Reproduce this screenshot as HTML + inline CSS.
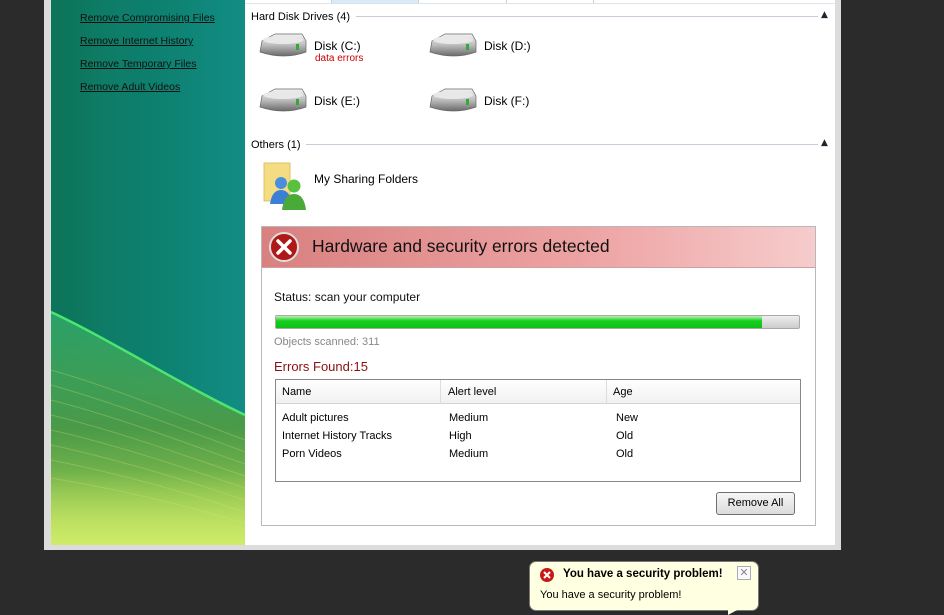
<!DOCTYPE html>
<html><head><meta charset="utf-8"><style>
*{margin:0;padding:0;box-sizing:border-box}
body{width:944px;height:614px;background:#2b2b2b;position:relative;overflow:hidden;font-family:Tahoma,"DejaVu Sans","Liberation Sans",sans-serif;font-size:11px;color:#000}
.a{position:absolute}
#win{left:44px;top:0;width:797px;height:550px;background:#dcdcdc}
#side{left:51px;top:0;width:194px;height:545px;overflow:hidden;background:linear-gradient(90deg,#0f7a5e 0%,#0d7f6e 50%,#128d84 100%)}
#side a{position:absolute;left:29px;color:#111;text-decoration:underline;font-size:10.5px;font-family:"Liberation Sans",sans-serif}
#main{left:245px;top:0;width:590px;height:545px;background:#fff}
.hdr{font-size:11px;color:#000;font-family:"Liberation Sans",sans-serif}
.line{height:1px;background:#c5cdd9}
.lbl{font-size:12px;font-family:"Liberation Sans",sans-serif}
</style></head><body>
<div id="win" class="a"></div>
<div id="side" class="a">
<svg width="194" height="545" style="position:absolute;left:0;top:0">
<defs>
<linearGradient id="g1" x1="0" y1="0" x2="0" y2="1"><stop offset="0" stop-color="#2fa86a" stop-opacity="0.85"/><stop offset="0.5" stop-color="#4a9a48"/><stop offset="1" stop-color="#b0d850"/></linearGradient>
<linearGradient id="g0" x1="0" y1="0" x2="1" y2="0"><stop offset="0" stop-color="#0a6f55" stop-opacity="0.6"/><stop offset="1" stop-color="#0a6f55" stop-opacity="0"/></linearGradient>
<linearGradient id="g2" x1="0" y1="0" x2="0" y2="1"><stop offset="0" stop-color="#d6f070" stop-opacity="0"/><stop offset="1" stop-color="#d6f070" stop-opacity="0.8"/></linearGradient>
</defs>
<rect x="0" y="0" width="60" height="545" fill="url(#g0)"/>
<path d="M0 312 C60 340 130 385 194 415 L194 545 L0 545 Z" fill="url(#g1)"/>
<path d="M0 312 C60 340 130 385 194 415" stroke="#50f070" stroke-width="2.5" fill="none" opacity="0.9"/>
<g stroke="#d8e070" stroke-opacity="0.3" stroke-width="1" fill="none">
<path d="M0 370 C70 390 140 420 194 440"/><path d="M0 385 C70 405 140 432 194 452"/>
<path d="M0 400 C70 418 140 445 194 464"/><path d="M0 415 C70 432 140 458 194 476"/>
<path d="M0 430 C70 446 140 470 194 488"/><path d="M0 445 C70 460 140 482 194 500"/>
<path d="M0 460 C70 474 140 494 194 512"/><path d="M0 478 C70 490 140 506 194 524"/>
</g>
<rect x="0" y="470" width="194" height="75" fill="url(#g2)"/>
</svg>
<a style="top:12px">Remove Compromising Files</a>
<a style="top:35px">Remove Internet History</a>
<a style="top:58px">Remove Temporary Files</a>
<a style="top:81px">Remove Adult Videos</a>
</div>
<div id="main" class="a">
<div class="a" style="left:0;top:0;width:590px;height:4px;border-bottom:1px solid #dde3ea"></div>
<div class="a" style="left:86px;top:0;width:88px;height:3px;background:#dbeaf7;border-left:1px solid #c8d0d8;border-right:1px solid #c8d0d8"></div>
<div class="a" style="left:261px;top:0;width:1px;height:3px;background:#c8d0d8"></div>
<div class="a" style="left:348px;top:0;width:1px;height:3px;background:#c8d0d8"></div>
<div class="a hdr" style="left:6px;top:11px">Hard Disk Drives (4)</div>
<div class="a line" style="left:111px;top:16px;width:462px"></div>
<div class="a" style="left:576px;top:10px;font-size:9px;color:#223">&#9650;</div>
<div class="a hdr" style="left:6px;top:139px">Others (1)</div>
<div class="a line" style="left:61px;top:144px;width:512px"></div>
<div class="a" style="left:576px;top:138px;font-size:9px;color:#223">&#9650;</div>
</div>
<svg class="a" style="left:0;top:0" width="944" height="614">
<defs><linearGradient id="dk" x1="0" y1="0" x2="0" y2="1"><stop offset="0" stop-color="#f4f4f4"/><stop offset="0.5" stop-color="#bdbdbd"/><stop offset="1" stop-color="#6a6a6a"/></linearGradient></defs>
<g id="d1"><path d="M262 41 L275 34 L302 34 L306 41 L306 52 Q284 60 260 52 Z" fill="url(#dk)" stroke="#666" stroke-width="0.7"/><ellipse cx="283" cy="40" rx="20" ry="4" fill="#e8e8e8"/><rect x="296" y="44" width="3" height="6" fill="#3a3"/></g>
<use href="#d1" x="170"/><use href="#d1" y="55"/><use href="#d1" x="170" y="55"/>
<rect x="264" y="163" width="26" height="38" fill="#f3dc82" stroke="#d8b850" stroke-width="0.8"/>
<circle cx="281" cy="183" r="6" fill="#4a8ee0"/><path d="M270 204 Q272 190 281 190 Q290 190 292 204Z" fill="#3b7fd6"/>
<circle cx="294" cy="186" r="6.5" fill="#5ac040"/><path d="M282 210 Q284 194 294 194 Q304 194 306 210Z" fill="#4aaa38"/>
</svg>
<div class="a lbl" style="left:314px;top:39px">Disk (C:)</div>
<div class="a" style="left:315px;top:53px;color:#c00;font-size:10px;font-family:'Liberation Sans',sans-serif">data errors</div>
<div class="a lbl" style="left:484px;top:39px">Disk (D:)</div>
<div class="a lbl" style="left:314px;top:94px">Disk (E:)</div>
<div class="a lbl" style="left:484px;top:94px">Disk (F:)</div>
<div class="a lbl" style="left:314px;top:172px">My Sharing Folders</div>
<div class="a" style="left:261px;top:226px;width:555px;height:300px;border:1px solid #b8b8b8;background:#fff"></div>
<div class="a" style="left:262px;top:227px;width:553px;height:41px;background:linear-gradient(90deg,#d98080 0%,#eea4a4 60%,#f6cccc 100%);border-bottom:1px solid #cfa0a0"></div>
<svg class="a" style="left:268px;top:231px" width="32" height="32"><circle cx="16" cy="16" r="14" fill="#b01818" stroke="#ddd" stroke-width="2"/><path d="M10 10 L22 22 M22 10 L10 22" stroke="#fff" stroke-width="3.5" stroke-linecap="round"/></svg>
<div class="a" style="left:312px;top:236px;font-size:17.5px;font-family:'Liberation Sans',sans-serif;color:#111">Hardware and security errors detected</div>
<div class="a" style="left:274px;top:290px;font-size:12px;font-family:'Liberation Sans',sans-serif;color:#111">Status: scan your computer</div>
<div class="a" style="left:275px;top:315px;width:525px;height:14px;border:1px solid #aaa;border-radius:2px;background:linear-gradient(#eee,#ccc)"></div>
<div class="a" style="left:276px;top:316px;width:486px;height:12px;background:linear-gradient(#bff0b8 0%,#18d020 40%,#0cc018 100%)"></div>
<div class="a" style="left:274px;top:336px;color:#888;font-size:11px;font-family:'Liberation Sans',sans-serif">Objects scanned: 311</div>
<div class="a" style="left:274px;top:359px;color:#8b1010;font-size:13px;font-family:'Liberation Sans',sans-serif">Errors Found:15</div>
<div class="a" style="left:275px;top:379px;width:526px;height:103px;border:1px solid #888;background:#fff"></div>
<div class="a" style="left:276px;top:380px;width:524px;height:24px;background:linear-gradient(#fff,#f1f1f1);border-bottom:1px solid #d5d5d5"></div>
<div class="a" style="left:440px;top:380px;width:1px;height:24px;background:#ddd"></div>
<div class="a" style="left:606px;top:380px;width:1px;height:24px;background:#ddd"></div>
<div style="font-family:'Liberation Sans',sans-serif;font-size:11px">
<div class="a" style="left:282px;top:386px">Name</div><div class="a" style="left:448px;top:386px">Alert level</div><div class="a" style="left:613px;top:386px">Age</div>
<div class="a" style="left:282px;top:412px">Adult pictures</div><div class="a" style="left:449px;top:412px">Medium</div><div class="a" style="left:616px;top:412px">New</div>
<div class="a" style="left:282px;top:430px">Internet History Tracks</div><div class="a" style="left:449px;top:430px">High</div><div class="a" style="left:616px;top:430px">Old</div>
<div class="a" style="left:282px;top:448px">Porn Videos</div><div class="a" style="left:449px;top:448px">Medium</div><div class="a" style="left:616px;top:448px">Old</div>
</div>
<div class="a" style="left:716px;top:492px;width:79px;height:23px;border:1px solid #707070;border-radius:3px;background:linear-gradient(#f6f6f6,#dcdcdc);text-align:center;line-height:21px;font-size:11px;font-family:'Liberation Sans',sans-serif">Remove All</div>
<div class="a" style="left:529px;top:561px;width:230px;height:50px;background:#ffffe1;border:1px solid #777;border-radius:7px"></div>
<svg class="a" style="left:725px;top:609px" width="20" height="6"><path d="M3 0 L3 6 L14 0Z" fill="#ffffe1"/></svg>
<svg class="a" style="left:539px;top:567px" width="16" height="16"><circle cx="8" cy="8" r="7" fill="#c81818"/><path d="M5 5 L11 11 M11 5 L5 11" stroke="#fff" stroke-width="2"/></svg>
<div class="a" style="left:563px;top:568px;font-weight:bold;font-size:11.5px;font-family:'Liberation Sans',sans-serif">You have a security problem!</div>
<div class="a" style="left:737px;top:566px;width:14px;height:14px;border:1px solid #aab;background:#fafafa;color:#889;font-size:11px;line-height:12px;text-align:center">&#x2715;</div>
<div class="a" style="left:540px;top:589px;font-size:11px;font-family:'Liberation Sans',sans-serif">You have a security problem!</div>
</body></html>
